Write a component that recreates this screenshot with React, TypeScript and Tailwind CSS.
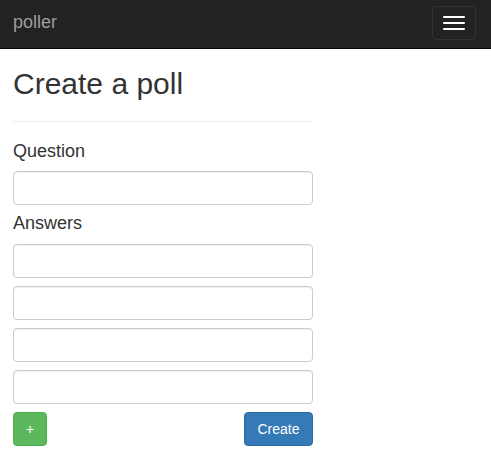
import React from 'react';

const inputClass =
  'block w-full h-[34px] rounded-[4px] border border-[#ccc] bg-white px-3 shadow-[inset_0_1px_1px_rgba(0,0,0,0.075)] outline-none';

const App: React.FC = () => {
  const answers = [0, 1, 2, 3];

  return (
    <div className="min-h-[466px] bg-white font-['Liberation_Sans',Arial,sans-serif] text-[14px] text-[#333]">
      <nav className="flex h-[49px] items-start justify-between border-b border-[#080808] bg-[#222] pl-[13px] pr-[15px]">
        <a className="mt-[9px] text-[18px] leading-[26px] text-[#9d9d9d]">poller</a>
        <button className="mt-[6px] flex h-[34px] w-[44px] flex-col items-center justify-center gap-[4px] rounded-[4px] border border-[#333]">
          <span className="block h-[2px] w-[22px] rounded-[1px] bg-white" />
          <span className="block h-[2px] w-[22px] rounded-[1px] bg-white" />
          <span className="block h-[2px] w-[22px] rounded-[1px] bg-white" />
        </button>
      </nav>

      <div className="w-[300px] ml-[13px]">
        <h1 className="mt-[18px] text-[30px] leading-[33px] font-normal">Create a poll</h1>
        <hr className="mt-[21px] border-0 border-t border-[#eee]" />

        <form>
          <label className="mt-[16px] block text-[18px] leading-[26px]">Question</label>
          <input className={`${inputClass} mt-[7px]`} />

          <label className="mt-[5px] block text-[18px] leading-[26px]">Answers</label>
          <div className="mt-[8px] flex flex-col gap-[8px]">
            {answers.map((i) => (
              <input key={i} className={inputClass} />
            ))}
          </div>

          <div className="mt-[8px] flex items-center justify-between">
            <button
              type="button"
              className="h-[34px] w-[34px] rounded-[4px] border border-[#4cae4c] bg-[#5cb85c] text-[14px] text-white"
            >
              +
            </button>
            <button
              type="button"
              className="h-[34px] w-[69px] rounded-[4px] border border-[#2e6da4] bg-[#337ab7] text-[14px] text-white"
            >
              Create
            </button>
          </div>
        </form>
      </div>
    </div>
  );
};

export default App;
